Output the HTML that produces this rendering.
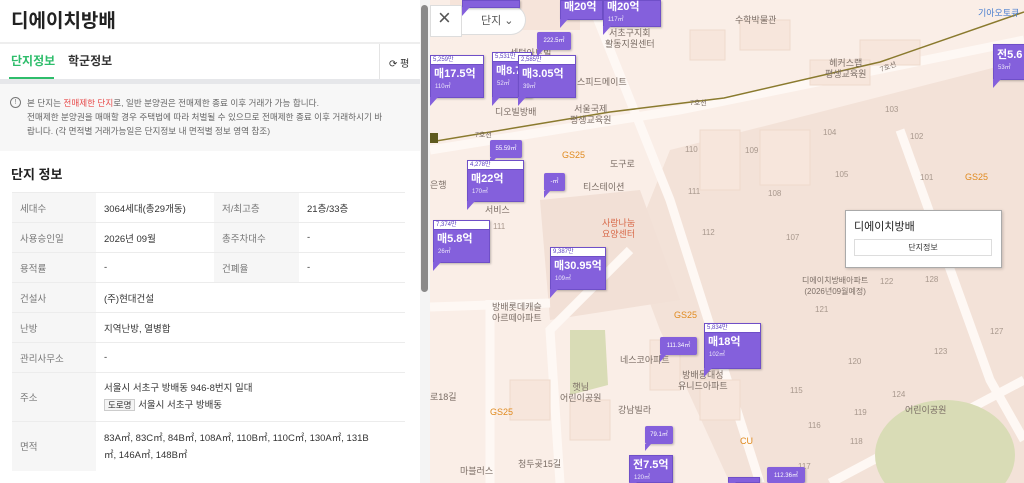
<!DOCTYPE html>
<html><head><meta charset="utf-8">
<style>
*{margin:0;padding:0;box-sizing:border-box}
html,body{width:1024px;height:483px;overflow:hidden}
body{position:relative;font-family:"Liberation Sans","Noto Sans CJK KR",sans-serif;background:#fff;color:#222}
#left{position:absolute;left:0;top:0;width:430px;height:483px;background:#fff;overflow:hidden}
.t{position:absolute;white-space:nowrap}
#map{position:absolute;left:430px;top:0;width:594px;height:483px;background:#faeee7;overflow:hidden}
.mk{position:absolute;background:#8460dc;border:1px solid #6f4fc8;color:#fff;box-shadow:1px 1px 2px rgba(0,0,0,.25)}
.mk .p{background:#fff;color:#5b3fc0;font-size:6px;height:9px;line-height:9px;padding-left:2px;border-bottom:1px solid #6f4fc8}
.mk .v{font-size:11px;font-weight:bold;padding:3px 0 0 3px;line-height:13px}
.mk .a{font-size:6px;padding-left:4px;opacity:.85}
.mk:after{content:"";position:absolute;left:-1px;bottom:-9px;border-left:8px solid #8460dc;border-bottom:9px solid transparent}
.sm{position:absolute;background:#8460dc;color:#fff;font-size:6px;text-align:center;line-height:18px;height:18px;border-radius:2px;box-shadow:1px 1px 2px rgba(0,0,0,.25)}
.sm:after{content:"";position:absolute;left:0;bottom:-7px;border-left:6px solid #8460dc;border-bottom:7px solid transparent}
.lb{position:absolute;font-size:9px;color:#7b6e66;white-space:nowrap;text-align:center;line-height:11px}
.num{position:absolute;font-size:8px;color:#a8988d}
.or{color:#e08a1e}
table{border-collapse:collapse;position:absolute;left:12px;top:192px;width:393px;font-size:9.5px}
td{border-top:1px solid #ececec;padding-left:8px;height:30px;color:#333}
td.k{background:#f6f6f6;color:#777;width:84px}
</style></head><body>
<div id="left">
 <div class="t" style="left:11px;top:6px;font-size:19px;font-weight:bold;color:#222">디에이치방배</div>
 <div style="position:absolute;left:0;top:42px;width:420px;height:2px;background:#eee"></div>
 <div class="t" style="left:11px;top:52px;font-size:12px;font-weight:bold;color:#2ebd6b">단지정보</div>
 <div style="position:absolute;left:9px;top:77px;width:45px;height:2px;background:#2ebd6b"></div>
 <div class="t" style="left:68px;top:52px;font-size:12px;font-weight:bold;color:#333">학군정보</div>
 <div style="position:absolute;left:379px;top:44px;width:41px;height:35px;border-left:1px solid #e4e4e4"></div>
 <div class="t" style="left:389px;top:55px;font-size:10px;color:#333">⟳ 평</div>
 <div style="position:absolute;left:0;top:79px;width:420px;height:5px;background:#e6e7ea"></div>
 <div style="position:absolute;left:0;top:84px;width:420px;height:67px;background:#f7f7f7"></div>
 <div style="position:absolute;left:10px;top:97px;width:11px;height:11px;border:1px solid #777;border-radius:50%;font-size:7px;line-height:9px;text-align:center;color:#777">!</div>
 <div class="t" style="left:27px;top:96px;font-size:8.6px;color:#666;line-height:14px">본 단지는 <b style="color:#e84b4b;font-weight:normal">전매제한 단지</b>로, 일반 분양권은 전매제한 종료 이후 거래가 가능 합니다.<br>전매제한 분양권을 매매할 경우 주택법에 따라 처벌될 수 있으므로 전매제한 종료 이후 거래하시기 바<br>랍니다. (각 면적별 거래가능일은 단지정보 내 면적별 정보 영역 참조)</div>
 <div class="t" style="left:11px;top:164px;font-size:13px;font-weight:bold;color:#222">단지 정보</div>
 <table>
  <tr><td class="k">세대수</td><td style="width:118px">3064세대(총29개동)</td><td class="k" style="width:85px">저/최고층</td><td>21층/33층</td></tr>
  <tr><td class="k">사용승인일</td><td>2026년 09월</td><td class="k">총주차대수</td><td>-</td></tr>
  <tr><td class="k">용적률</td><td>-</td><td class="k">건폐율</td><td>-</td></tr>
  <tr><td class="k">건설사</td><td colspan="3">(주)현대건설</td></tr>
  <tr><td class="k">난방</td><td colspan="3">지역난방, 열병합</td></tr>
  <tr><td class="k">관리사무소</td><td colspan="3">-</td></tr>
  <tr><td class="k" style="height:49px">주소</td><td colspan="3" style="line-height:17px">서울시 서초구 방배동 946-8번지 일대<br><span style="border:1px solid #ccc;background:#f4f4f4;padding:0 3px;font-size:8.5px">도로명</span> 서울시 서초구 방배동</td></tr>
  <tr><td class="k" style="height:49px">면적</td><td colspan="3" style="line-height:17px;padding-top:2px">83A㎡, 83C㎡, 84B㎡, 108A㎡, 110B㎡, 110C㎡, 130A㎡, 131B<br>㎡, 146A㎡, 148B㎡</td></tr>
 </table>
 <div style="position:absolute;left:420px;top:0;width:10px;height:483px;background:#f4f4f4"></div>
 <div style="position:absolute;left:421px;top:5px;width:7px;height:287px;background:#8a8a8a;border-radius:4px"></div>
</div>
<div id="map">
 <svg width="594" height="483" style="position:absolute;left:0;top:0">
  <polygon points="240,150 390,112 594,60 594,483 300,483 230,330 200,250" fill="#f3e2d8"/>
  <polygon points="110,200 210,190 250,300 120,320" fill="#f2e0d6"/>
  <g stroke="#fef8f4" stroke-width="9" fill="none">
   <path d="M0,150 L250,110 L594,40"/>
   <path d="M160,0 L240,200 L330,483"/>
   <path d="M470,130 L560,380 L594,440"/>
   <path d="M0,307 L120,303"/>
   <path d="M60,300 L60,483"/>
   <path d="M200,250 L120,330 L130,483"/>
   <path d="M400,483 L594,380"/>
  </g>
  <g fill="#f7e6dc" stroke="#efdacd">
   <rect x="270" y="130" width="40" height="60"/><rect x="330" y="130" width="50" height="55"/>
   <rect x="260" y="30" width="35" height="30"/><rect x="310" y="20" width="50" height="30"/>
   <rect x="430" y="40" width="60" height="25"/><rect x="380" y="60" width="60" height="25"/>
   <rect x="80" y="380" width="40" height="40"/><rect x="140" y="400" width="40" height="40"/>
   <rect x="220" y="340" width="30" height="50"/><rect x="270" y="380" width="40" height="40"/>
  </g>
  <g fill="#f6e4da"><rect x="20" y="0" width="130" height="30"/></g>
  <polygon points="140,330 175,330 178,385 140,395" fill="#d9dcb6"/>
  <ellipse cx="515" cy="455" rx="70" ry="55" fill="#d9dcb6"/>
  <polyline points="0,142 180,112 294,98 450,62 594,12" stroke="#8a7a2e" stroke-width="1.5" fill="none"/>
  <rect x="0" y="133" width="8" height="10" fill="#5f5a1f"/>
 </svg>
 <div class="lb" style="left:45px;top:130px;font-size:7px">7호선</div>
 <div class="lb" style="left:260px;top:98px;font-size:7px">7호선</div>
 <div class="lb" style="left:450px;top:62px;font-size:7px;transform:rotate(-20deg)">7호선</div>
 <div class="lb" style="left:175px;top:28px">서초구지회<br>활동지원센터</div>
 <div class="lb" style="left:80px;top:48px">센텀아트빌</div>
 <div class="lb" style="left:147px;top:77px">스피드메이트</div>
 <div class="lb" style="left:65px;top:107px">디오빌방배</div>
 <div class="lb" style="left:140px;top:104px">서울국제<br>평생교육원</div>
 <div class="lb or" style="left:132px;top:150px">GS25</div>
 <div class="lb" style="left:180px;top:159px">도구로</div>
 <div class="lb" style="left:153px;top:182px">티스테이션</div>
 <div class="lb" style="left:0;top:180px">은행</div>
 <div class="lb" style="left:55px;top:205px">서비스</div>
 <div class="lb" style="left:172px;top:218px;color:#d86a4a">사랑나눔<br>요양센터</div>
 <div class="lb" style="left:305px;top:15px">수학박물관</div>
 <div class="lb" style="left:548px;top:8px;color:#4a7fd0">기아오토큐</div>
 <div class="lb" style="left:395px;top:58px">헤커스랩<br>평생교육원</div>
 <div class="lb or" style="left:535px;top:172px">GS25</div>
 <div class="lb" style="left:372px;top:275px;font-size:8px">디에이치방배아파트<br>(2026년09월예정)</div>
 <div class="lb" style="left:62px;top:302px">방배롯데캐슬<br>아르떼아파트</div>
 <div class="lb or" style="left:244px;top:310px">GS25</div>
 <div class="lb" style="left:130px;top:382px">햇님<br>어린이공원</div>
 <div class="lb" style="left:248px;top:370px">방배동대성<br>유니드아파트</div>
 <div class="lb" style="left:190px;top:355px">네스코아파트</div>
 <div class="lb" style="left:188px;top:405px">강남빌라</div>
 <div class="lb or" style="left:60px;top:407px">GS25</div>
 <div class="lb or" style="left:310px;top:436px">CU</div>
 <div class="lb" style="left:475px;top:405px">어린이공원</div>
 <div class="lb" style="left:30px;top:466px">마블러스</div>
 <div class="lb" style="left:88px;top:459px">청두곶15길</div>
 <div class="lb" style="left:0;top:392px">로18길</div>
 <div class="num" style="left:63px;top:222px">111</div><div class="num" style="left:255px;top:145px">110</div>
 <div class="num" style="left:258px;top:187px">111</div><div class="num" style="left:272px;top:228px">112</div>
 <div class="num" style="left:455px;top:105px">103</div><div class="num" style="left:393px;top:128px">104</div>
 <div class="num" style="left:480px;top:132px">102</div><div class="num" style="left:315px;top:146px">109</div>
 <div class="num" style="left:405px;top:170px">105</div><div class="num" style="left:490px;top:173px">101</div>
 <div class="num" style="left:338px;top:189px">108</div><div class="num" style="left:356px;top:233px">107</div>
 <div class="num" style="left:504px;top:347px">123</div><div class="num" style="left:560px;top:327px">127</div>
 <div class="num" style="left:418px;top:357px">120</div><div class="num" style="left:462px;top:390px">124</div>
 <div class="num" style="left:424px;top:408px">119</div><div class="num" style="left:360px;top:386px">115</div>
 <div class="num" style="left:378px;top:421px">116</div><div class="num" style="left:420px;top:437px">118</div>
 <div class="num" style="left:385px;top:305px">121</div><div class="num" style="left:368px;top:462px">117</div>
 <div class="num" style="left:495px;top:275px">128</div><div class="num" style="left:450px;top:277px">122</div>

 <div style="position:absolute;left:0;top:5px;width:32px;height:32px;background:#fff;border:1px solid #ddd"></div>
 <div class="t" style="left:8px;top:5px;font-size:22px;color:#555;font-weight:300">×</div>
 <div style="position:absolute;left:32px;top:5px;width:64px;height:30px;background:#fff;border:1px solid #ddd;border-left:none;border-radius:0 16px 16px 0"></div>
 <div class="t" style="left:51px;top:12px;font-size:11px;color:#555">단지 ⌄</div>

 <div class="mk" style="left:32px;top:0;width:58px;height:8px"></div>
 <div class="mk" style="left:130px;top:0;width:43px;height:20px"><div class="v" style="padding-top:0">매20억</div></div>
 <div class="mk" style="left:173px;top:0;width:58px;height:27px"><div class="v" style="padding-top:0">매20억</div><div class="a">117㎡</div></div>
 <div class="sm" style="left:107px;top:32px;width:34px">222.5㎡</div>
 <div class="mk" style="left:0;top:55px;width:54px;height:43px"><div class="p">5,259만</div><div class="v">매17.5억</div><div class="a">110㎡</div></div>
 <div class="mk" style="left:62px;top:52px;width:40px;height:46px"><div class="p">5,531만</div><div class="v">매8.7</div><div class="a">52㎡</div></div>
 <div class="mk" style="left:88px;top:55px;width:58px;height:43px"><div class="p">2,585만</div><div class="v">매3.05억</div><div class="a">39㎡</div></div>
 <div class="sm" style="left:60px;top:140px;width:32px">55.59㎡</div>
 <div class="mk" style="left:37px;top:160px;width:57px;height:42px"><div class="p">4,278만</div><div class="v">매22억</div><div class="a">170㎡</div></div>
 <div class="sm" style="left:114px;top:173px;width:21px">-㎡</div>
 <div class="mk" style="left:3px;top:220px;width:57px;height:43px"><div class="p">7,374만</div><div class="v">매5.8억</div><div class="a">26㎡</div></div>
 <div class="mk" style="left:120px;top:247px;width:56px;height:43px"><div class="p">9,387만</div><div class="v">매30.95억</div><div class="a">109㎡</div></div>
 <div class="sm" style="left:230px;top:337px;width:37px">111.34㎡</div>
 <div class="mk" style="left:274px;top:323px;width:57px;height:46px"><div class="p">5,834만</div><div class="v">매18억</div><div class="a">102㎡</div></div>
 <div class="sm" style="left:215px;top:426px;width:28px">79.1㎡</div>
 <div class="mk" style="left:199px;top:455px;width:44px;height:28px"><div class="v">전7.5억</div><div class="a">120㎡</div></div>
 <div class="sm" style="left:337px;top:467px;width:38px;height:16px">112.36㎡</div>
 <div class="mk" style="left:298px;top:477px;width:32px;height:6px"></div>
 <div class="mk" style="left:563px;top:44px;width:40px;height:36px"><div class="v" style="padding-top:4px">전5.6</div><div class="a">53㎡</div></div>

 <div style="position:absolute;left:415px;top:210px;width:157px;height:58px;background:#fff;border:1px solid #aaa;box-shadow:1px 1px 3px rgba(0,0,0,.2)"></div>
 <div class="t" style="left:424px;top:218px;font-size:11px;color:#222">디에이치방배</div>
 <div style="position:absolute;left:424px;top:239px;width:138px;height:17px;border:1px solid #ddd;font-size:8px;text-align:center;line-height:15px;color:#333">단지정보</div>
</div>
</body></html>
